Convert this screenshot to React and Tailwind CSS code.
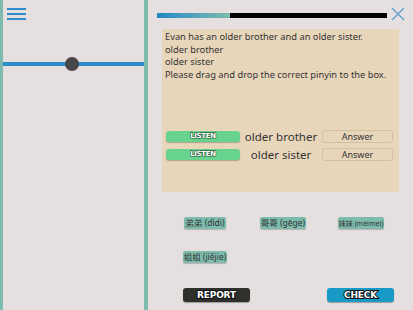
import React from "react";

const font = { fontFamily: '"Noto Sans", "Open Sans", sans-serif' };

function ListenRow({ label }) {
  return (
    <div className="flex items-center h-[13px] pl-[4px] pr-[6px]">
      <div className="w-[74px] h-[11px] rounded-[3px] bg-[#68d38f] shadow-[0_1px_1px_rgba(0,0,0,0.25)] flex items-center justify-center">
        <span
          className="text-[7px] font-bold text-white leading-none tracking-[-0.3px] [paint-order:stroke_fill] [-webkit-text-stroke:1.2px_#2d5a3a]"
          style={{ fontFamily: '"DejaVu Sans", sans-serif' }}
        >
          LISTEN
        </span>
      </div>
      <div className="flex-1 text-center text-[11.5px] leading-none text-[#333]">{label}</div>
      <div className="w-[71px] h-[13px] rounded-[3px] border border-[#d4c0a0] flex items-center justify-center text-[9px] leading-none text-[#333]">
        Answer
      </div>
    </div>
  );
}

function Chip({ children, small }) {
  return (
    <div className="flex justify-center">
      <div
        className={`h-[12px] px-[1px] rounded-[2px] bg-[#7dbcac] shadow-[0_1px_1px_rgba(0,0,0,0.2)] flex items-center text-[#333] leading-none whitespace-nowrap ${small ? "text-[7px]" : "text-[8.5px]"}`}
        style={{ fontFamily: '"Noto Sans", "Noto Sans CJK SC", sans-serif' }}
      >
        {children}
      </div>
    </div>
  );
}

function BigButton({ children, className }) {
  return (
    <div className={`w-[67px] h-[14px] rounded-[3px] flex items-center justify-center shadow-[0_1px_1px_rgba(0,0,0,0.3)] ${className}`}>
      <span
        className="text-[9px] font-bold text-white leading-none tracking-[-0.2px] [paint-order:stroke_fill] [-webkit-text-stroke:2px_#111]"
        style={{ fontFamily: '"DejaVu Sans", sans-serif' }}
      >
        {children}
      </span>
    </div>
  );
}

export default function App() {
  return (
    <div className="w-[413px] h-[310px] bg-[#e6dfe0] flex overflow-hidden" style={font}>
      <div className="w-[3px] h-full bg-[#7dbcac]" />
      <div className="w-[141px] h-full flex flex-col">
        <div className="pl-[4px] pt-[8px] flex flex-col gap-[3px]">
          <div className="w-[19px] h-[2px] bg-[#2a8ecb]" />
          <div className="w-[19px] h-[2px] bg-[#2a8ecb]" />
          <div className="w-[19px] h-[2px] bg-[#2a8ecb]" />
        </div>
        <div className="relative mt-[42px] h-[4px] bg-[#2a8ecb]">
          <div className="absolute left-[62px] top-[-5px] w-[14px] h-[14px] rounded-full bg-[#484848]" />
        </div>
      </div>
      <div className="w-[4px] h-full bg-[#7dbcac]" />
      <div className="flex-1 flex flex-col">
        <div className="flex items-start mt-[7px] h-[13px] pl-[9px]">
          <div className="mt-[6px] w-[230px] h-[5px] flex">
            <div className="w-[73px] h-full bg-gradient-to-r from-[#1a88c4] to-[#7dbcac]" />
            <div className="flex-1 h-full bg-black" />
          </div>
          <svg className="ml-[4px]" width="14" height="14" viewBox="0 0 14 14">
            <path d="M1 1 L13 13 M13 1 L1 13" stroke="#5a9fd0" strokeWidth="1.3" fill="none" />
          </svg>
        </div>
        <div className="ml-[14px] mt-[9px] w-[237px] h-[163px] bg-[#e8d6bb] pt-[2px]">
          <div className="pl-[3px] text-[9.3px] leading-[12.7px] text-[#333]">
            <div>Evan has an older brother and an older sister.</div>
            <div>older brother</div>
            <div>older sister</div>
            <div>Please drag and drop the correct pinyin to the box.</div>
          </div>
          <div className="mt-[48px] flex flex-col gap-[5px]">
            <ListenRow label="older brother" />
            <ListenRow label="older sister" />
          </div>
        </div>
        <div className="mt-[25px] ml-[18px] w-[234px] grid grid-cols-3 gap-y-[22px]">
          <Chip>弟弟 (dìdi)</Chip>
          <Chip>哥哥 (gēge)</Chip>
          <Chip small>妹妹 (mèimei)</Chip>
          <Chip>姐姐 (jiějie)</Chip>
        </div>
        <div className="mt-[25px] flex pl-[35px]">
          <BigButton className="bg-[#2f2f2b]">REPORT</BigButton>
          <BigButton className="ml-[77px] bg-[#189ac6]">CHECK</BigButton>
        </div>
      </div>
    </div>
  );
}
